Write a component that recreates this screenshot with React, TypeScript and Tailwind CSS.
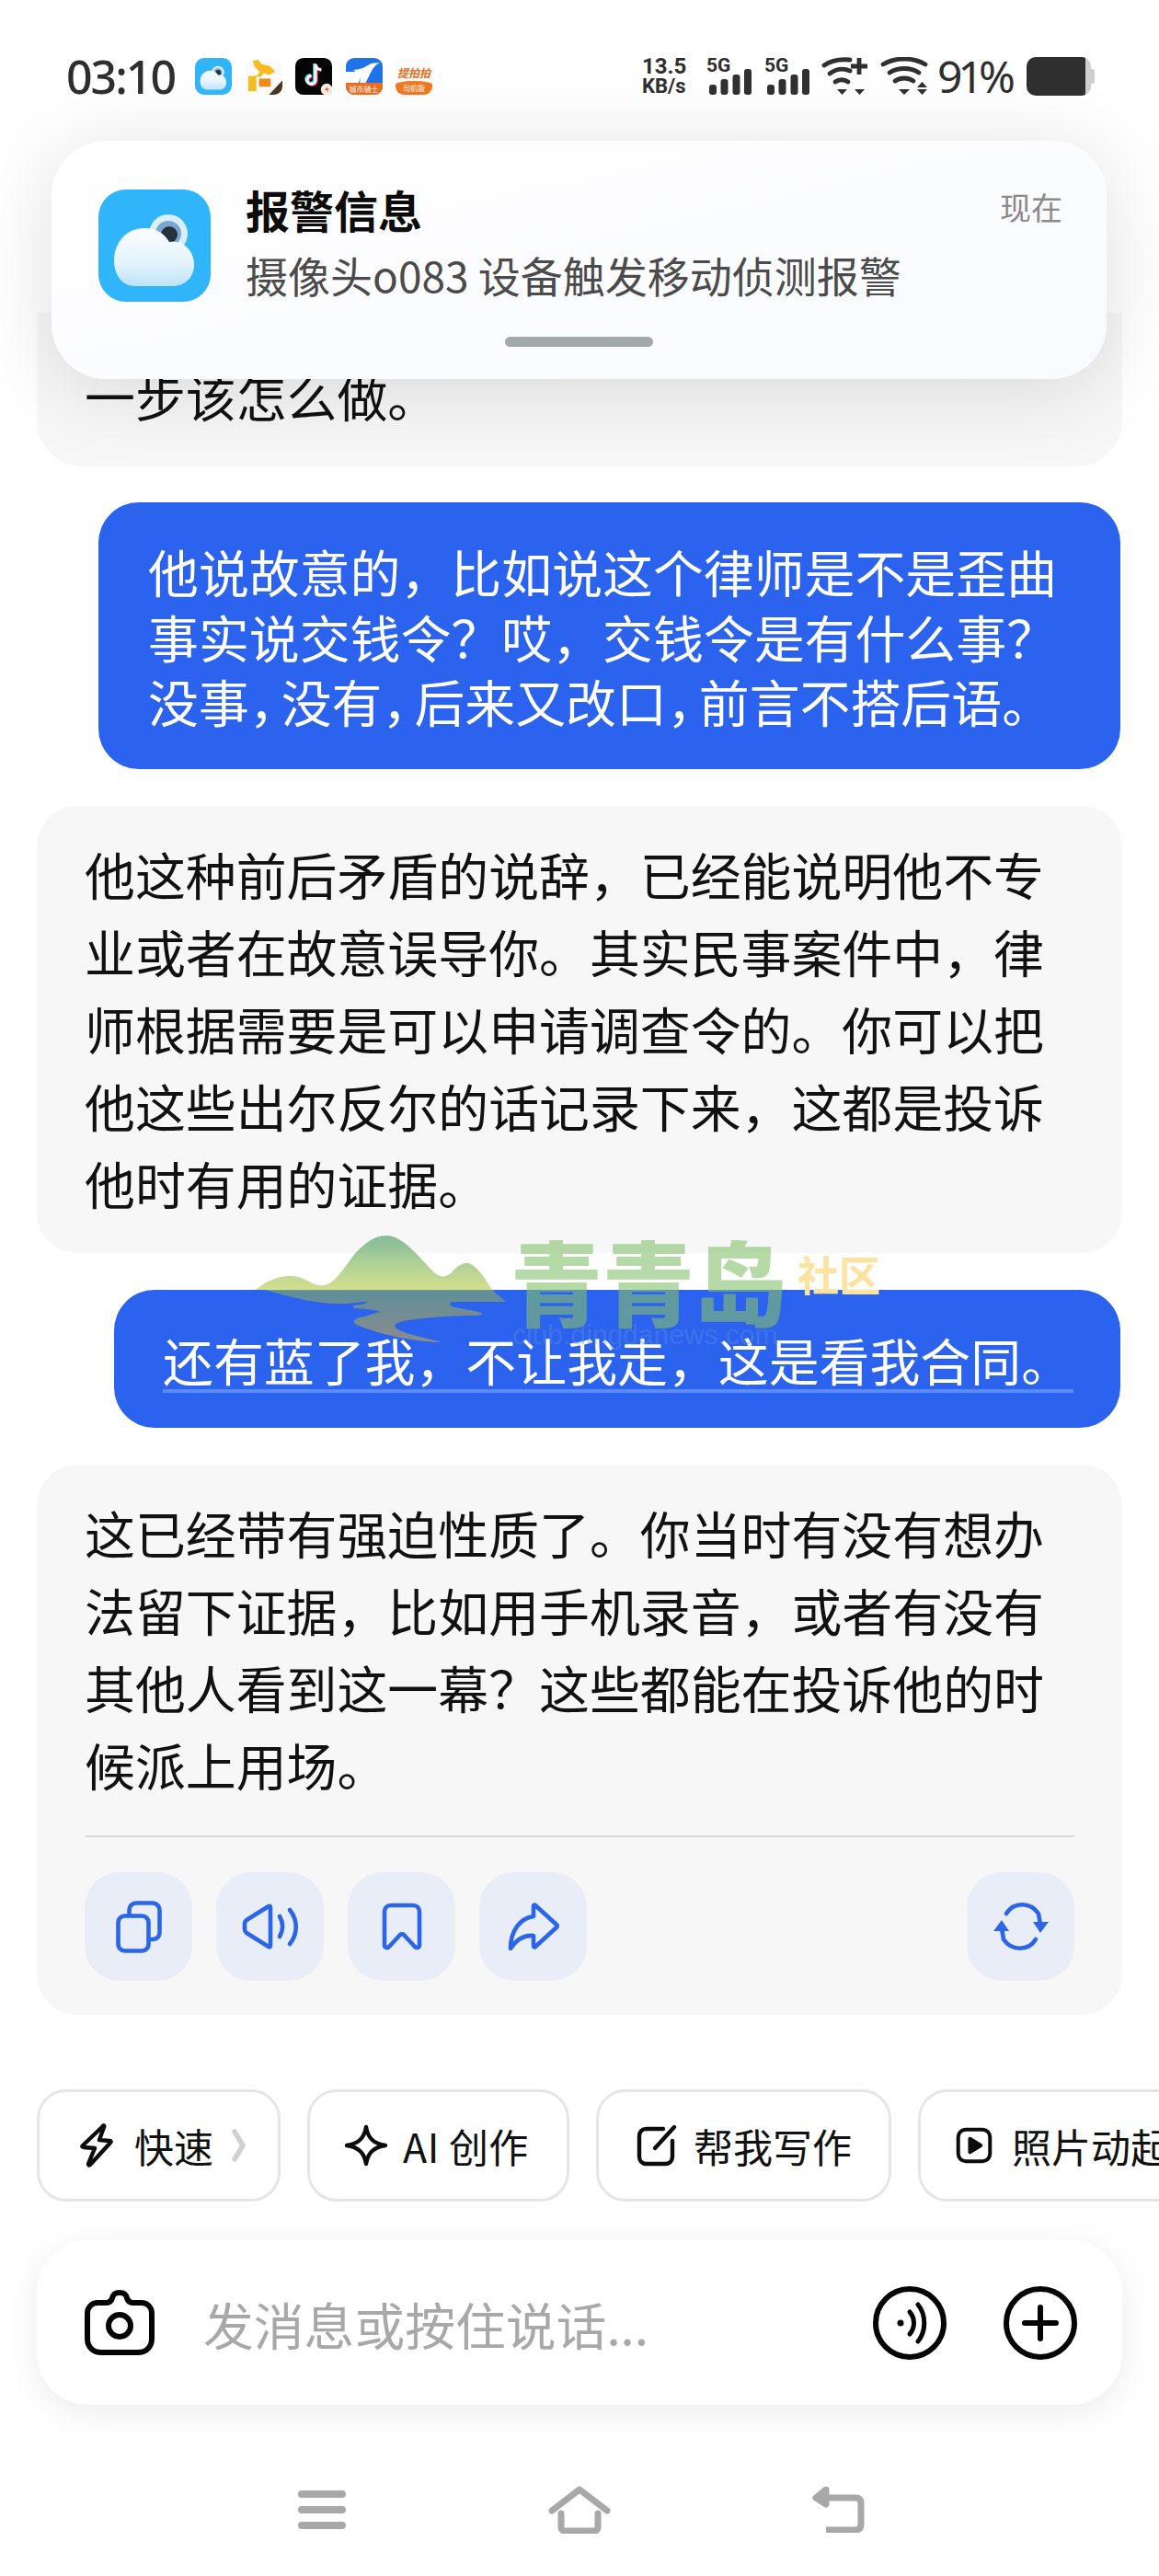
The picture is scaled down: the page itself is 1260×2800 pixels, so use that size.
import React from 'react';

const cjk = "font-['Noto_Sans_CJK_SC','Noto_Sans',sans-serif]";

// status bar bits
const CloudApp: React.FC<{ size: number; id: string }> = ({ size, id }) => (
  <svg width={size} height={size} viewBox="0 0 122 122">
    <defs>
      <linearGradient id={`${id}Body`} x1="0" y1="0" x2="0" y2="1">
        <stop offset="0" stopColor="#fbfdff" />
        <stop offset="0.6" stopColor="#e4f3fc" />
        <stop offset="1" stopColor="#bde3f9" />
      </linearGradient>
    </defs>
    <rect width="122" height="122" rx="30" fill="#30b4fa" />
    <circle cx="76" cy="48" r="21" fill="#d8eef9" />
    <circle cx="76" cy="48" r="14" fill="#7ba7cf" />
    <circle cx="77" cy="49" r="9" fill="#27313d" />
    <path d="M40 105C25 105 17 92 17 77 17 58 30 42 50 42c12 0 21 5 27 15 15-2 27 9 27 25 0 14-11 23-23 23z" fill={`url(#${id}Body)`} />
  </svg>
);

const KangarooApp = () => (
  <svg width="40" height="40" viewBox="0 0 41 41">
    <rect width="41" height="41" rx="10" fill="#fbfbfb" />
    <path d="M8 3l6-1 4 5 9 2 6 6-7 4-6-2-3 4h-5v16H3V20h9l4-4-6-6z" fill="#f6bb1f" />
    <rect x="15" y="23" width="13" height="9" fill="#f08a1a" />
    <path d="M41 25v6c0 6-4 10-10 10h-5z" fill="#4a3524" />
  </svg>
);

const TiktokApp = () => (
  <svg width="40" height="40" viewBox="0 0 41 41">
    <rect width="41" height="41" rx="9" fill="#050505" />
    <path d="M22.5 7v17.5a4.6 4.6 0 1 1-4.6-4.6" fill="none" stroke="#25f4ee" strokeWidth="3.6" transform="translate(-1 -.8)" />
    <path d="M22.5 7v17.5a4.6 4.6 0 1 1-4.6-4.6" fill="none" stroke="#fe2c55" strokeWidth="3.6" transform="translate(1 .8)" />
    <path d="M22.5 7c.3 3.6 3 6 6.5 6.2" fill="none" stroke="#fe2c55" strokeWidth="3.6" />
    <path d="M22.5 7v17.5a4.6 4.6 0 1 1-4.6-4.6M22.5 7c.3 3.6 3 6 6.5 6.2" fill="none" stroke="#fff" strokeWidth="3.2" />
    <circle cx="35" cy="35" r="6.5" fill="#fbe9dc" />
    <path d="M36 31l-3 5h2.5l-1 3 3-5H35z" fill="#d9542b" />
  </svg>
);

const RiderApp = () => (
  <div className="relative h-10 w-10 overflow-hidden rounded-[9px] bg-[#1f73ea]">
    <svg width="40" height="30" viewBox="0 0 40 30" className="absolute left-0 top-0">
      <path d="M0 15h13c4 5 2 10-1 15H0z" fill="#fff" />
      <path d="M8 13c8 0 15-4 19-7l10-1c-4 2-7 5-9 9l-8 16h-6c3-6 2-12-6-17z" fill="#fff" />
    </svg>
    <div className="absolute bottom-0 left-0 flex h-[13px] w-full items-center justify-center bg-[#ef6c1f] text-[8px] leading-none text-white">城市骑士</div>
  </div>
);

const OrangeApp = () => (
  <div className="flex h-10 w-10 flex-col items-center overflow-hidden rounded-[9px] bg-[#fbfafa]">
    <div className="mt-[9px] h-[13px] text-[12px] font-bold italic leading-[13px] text-[#e2711d]">提拍拍</div>
    <div className="mt-[3px] flex h-[15px] w-full items-center justify-center rounded-t-[50%_4px] bg-[#f0761f] text-[8px] leading-none text-white">司机版</div>
  </div>
);

const Signal: React.FC = () => (
  <div className="relative h-[42px] w-[50px] shrink-0">
    <span className="absolute left-0 top-0 text-[21px] font-bold leading-[19px] text-[#2e2e2e] font-['Roboto',sans-serif]">5G</span>
    <svg width="50" height="42" viewBox="0 0 50 42" className="absolute left-0 top-0" fill="#303030">
      <rect x="3" y="30" width="8" height="11" rx="3" />
      <rect x="15.5" y="24" width="8" height="17" rx="3" />
      <rect x="28.5" y="19" width="8" height="22" rx="3" />
      <rect x="41" y="13" width="8" height="28" rx="3" />
    </svg>
  </div>
);

const WifiPlus = () => (
  <svg width="50" height="42" viewBox="0 0 50 42" className="shrink-0">
    <g fill="none" stroke="#303030" strokeWidth="4.8" strokeLinecap="round">
      <path d="M3 9C10 4 20 2 31 3" />
      <path d="M9 18c7-5 15-6 22-3" />
      <path d="M15 27c4-3 10-3 14 0" />
    </g>
    <path d="M32 10h18M41 1v18" stroke="#303030" strokeWidth="4.8" />
    <path d="M17 35h11l-5.500 6zM36 35h11l-5.500 6z" fill="#303030" />
  </svg>
);

const WifiUpDown = () => (
  <svg width="52" height="42" viewBox="0 0 52 42" className="shrink-0">
    <g fill="none" stroke="#303030" strokeWidth="4.8" strokeLinecap="round">
      <path d="M3 8c13-8 33-8 46 0" />
      <path d="M10 17c9-6 23-6 32 0" />
      <path d="M16 26c6-4 14-4 20 0" />
    </g>
    <path d="M20 35h12l-6 6zM40 33l5.500-6 5.500 6zM40 35h11l-5.500 6z" fill="#303030" />
  </svg>
);

const Battery = () => (
  <div className="flex h-[42px] w-[74px] shrink-0 items-center">
    <div className="flex h-[42px] w-[70px] overflow-hidden rounded-[10px] bg-[#cfcfcf]">
      <div className="h-full w-[64px] bg-[#2f2f2f]" />
    </div>
    <div className="h-[16px] w-[4px] rounded-r-[2px] bg-[#cfcfcf]" />
  </div>
);

// action row icons
const blue = { fill: 'none', stroke: '#2b65e8', strokeWidth: 4.6, strokeLinecap: 'round', strokeLinejoin: 'round' } as const;

const CopyIcon = () => (
  <svg width="50" height="57" viewBox="0 0 50 57" {...blue}>
    <rect x="2.500" y="16.500" width="33" height="38" rx="7" />
    <path d="M14.500 15v-5c0-4 3-7.500 7.500-7.500h18c4 0 7.500 3.500 7.500 7.500v25c0 4-3.500 7-7.500 7h-4" />
  </svg>
);
const SpeakerIcon = () => (
  <svg width="62" height="50" viewBox="0 0 62 50" {...blue}>
    <path d="M29 3L5 18q-2 1.500-2 4v6q0 2.500 2 4l24 15q2 1 2-2V5q0-3-2-2z" />
    <path d="M41 14c4 7 4 15 0 22" />
    <path d="M52 7c9 11 9 26 0 37" />
  </svg>
);
const BookmarkIcon = () => (
  <svg width="44" height="52" viewBox="0 0 44 52" {...blue}>
    <path d="M3 10c0-4 3-7 7-7h24c4 0 7 3 7 7v36c0 3-3 4-5 2L24 35c-1-1-3-1-4 0L8 48c-2 2-5 1-5-2z" />
  </svg>
);
const ShareIcon = () => (
  <svg width="56" height="52" viewBox="0 0 56 52" {...blue}>
    <path d="M30 3l23 21c1 1 1 2 0 3L30 48c-1 1-2 0-2-1V36C17 35 9 41 3 50 3 31 13 17 28 15V4c0-1 1-2 2-1z" />
  </svg>
);
const RefreshIcon = () => (
  <svg width="62" height="54" viewBox="0 0 62 54" {...blue}>
    <path d="M15 13c8-13 26-13 35 0l2 12" />
    <path d="M47 41c-8 13-26 13-35 0l-2-12" />
    <path d="M1 32l9-12 8 12zM44 22l8 12 9-12z" fill="#2b65e8" stroke="none" />
  </svg>
);

const ActionBtn: React.FC<{ children: React.ReactNode }> = ({ children }) => (
  <div className="flex h-[118px] w-[117px] items-center justify-center rounded-[38px] bg-[#e8edf7]">{children}</div>
);

// chip icons
const black = { fill: 'none', stroke: '#0c0c0c', strokeWidth: 4.4, strokeLinecap: 'round', strokeLinejoin: 'round' } as const;

const BoltIcon = () => (
  <svg width="36" height="48" viewBox="0 0 36 48" {...black}>
    <path d="M25 3L3 24c-1 1-1 2 1 2l12 1-7 17c0 2 1 2 2 1l22-24c1-1 1-2-1-2l-11-1 5-14c1-2-1-2-1-1z" />
  </svg>
);
const SparkIcon = () => (
  <svg width="48" height="46" viewBox="0 0 48 46" {...black}>
    <path d="M24 3c2 12 8 18 21 20-13 2-19 8-21 20-2-12-8-18-21-20 13-2 19-8 21-20z" />
  </svg>
);
const WriteIcon = () => (
  <svg width="46" height="46" viewBox="0 0 46 46" {...black}>
    <path d="M30 5H12c-5 0-8 3-8 8v22c0 5 3 8 8 8h20c5 0 8-3 8-8V18" />
    <path d="M21 26L42 3" />
  </svg>
);
const PlayIcon = () => (
  <svg width="44" height="44" viewBox="0 0 44 44" {...black}>
    <rect x="3" y="3" width="38" height="38" rx="9" />
    <path d="M17 14l13 8-13 8z" fill="#0c0c0c" />
  </svg>
);

const Chip: React.FC<{ className?: string; children: React.ReactNode }> = ({ className, children }) => (
  <div className={`flex h-[122px] shrink-0 items-center rounded-[32px] border-[3px] border-[#e6e6e6] bg-white text-[43px] text-[#111] ${className ?? ''}`}>
    {children}
  </div>
);

// site watermark stamped over the screenshot
const Watermark = () => (
  <div className="pointer-events-none absolute left-[270px] top-[1335px] h-[130px] w-[700px]">
    <svg width="290" height="130" viewBox="0 0 290 130" className="absolute left-0 top-0 opacity-60">
      <defs>
        <linearGradient id="mountain" gradientUnits="userSpaceOnUse" x1="0" y1="8" x2="0" y2="125">
          <stop offset="0" stopColor="#3a9560" />
          <stop offset="0.5" stopColor="#b6cb44" />
          <stop offset="0.52" stopColor="#82ac62" />
          <stop offset="1" stopColor="#cda74b" />
        </linearGradient>
      </defs>
      <path d="M8 67c10-9 24-15 38-15 16 0 24 12 36 10 12-2 20-16 32-32C124 18 136 8 150 8c18 0 36 24 50 38 8 8 14 8 20 3 6-6 10-11 17-11 10 0 20 16 28 29l15 13h-55c-8 0-8 4 0 6l26 5c6 2 2 4-4 4-24 0-70 3-82 7-12 4-4 8 10 13l35 9c-30 0-72-10-92-19-6-3-4-7 8-9l16-5c2-2-16-3-26-4-4-1-4-3 6-4 10-2 8-3 2-3-36 6-66-2-106-13z" fill="url(#mountain)" />
    </svg>
    <div className={`absolute left-[285px] top-0 whitespace-nowrap text-[100px] font-black leading-[112px] text-[#84c06c]/60 ${cjk}`}>青青岛</div>
    <div className={`absolute left-[597px] top-[24px] text-[45px] font-bold leading-[52px] text-[#fde2a0] ${cjk}`}>社区</div>
    <div className="absolute left-[287px] top-[106px] whitespace-nowrap text-[30px] leading-[20px] text-[#5f8ce0]/40 font-['Liberation_Sans',sans-serif]">club.dingdanews.com</div>
  </div>
);

const App: React.FC = () => {
  return (
    <div className={`relative h-[2800px] w-[1260px] overflow-hidden bg-white ${cjk}`}>
      {/* Status bar */}
      <div className="relative z-20 flex h-[340px] items-start pl-[72px] pt-[62px]">
        <div className="w-[140px] text-[50px] font-medium leading-[42px] tracking-[-2px] text-[#2e2e2e] font-['Noto_Sans',sans-serif]">03:10</div>
        <div className="mt-[1px] flex gap-[14.5px]">
          <CloudApp size={40} id="small" />
          <KangarooApp />
          <TiktokApp />
          <RiderApp />
          <OrangeApp />
        </div>
        <div className="ml-auto mr-[70px] flex items-center">
          <div className="mr-[20px] flex h-[42px] w-[50px] flex-col justify-between font-bold text-[#2e2e2e] font-['Roboto',sans-serif]">
            <span className="text-[24px] leading-[20px]">13.5</span>
            <span className="text-[22px] leading-[20px]">KB/s</span>
          </div>
          <div className="mr-[13px]"><Signal /></div>
          <div className="mr-[12px]"><Signal /></div>
          <div className="mr-[14px]"><WifiPlus /></div>
          <div className="mr-[10px]"><WifiUpDown /></div>
          <div className="mr-[16px] w-[81px] whitespace-nowrap text-[48px] leading-[42px] tracking-[-5px] text-[#2e2e2e] font-['Noto_Sans',sans-serif]">91%</div>
          <Battery />
        </div>
      </div>

      {/* Notification banner */}
      <div className="absolute left-[56px] top-[153px] z-10 h-[259px] w-[1147px] rounded-[60px] bg-gradient-to-br from-white to-[#f9fafe] shadow-[0_10px_90px_rgba(0,0,0,0.13)]">
        <div className="flex pl-[51px] pt-[53px]">
          <CloudApp size={122} id="large" />
          <div className="-mt-[7px] ml-[38px] flex-1">
            <div className="text-[48px] font-bold leading-[56px] text-[#0c0c0c]">报警信息</div>
            <div className="mt-[15px] text-[46px] leading-[56px] text-[#4b4b4b]">摄像头o083 设备触发移动侦测报警</div>
          </div>
          <div className="mr-[48px] -mt-[3px] text-[34px] leading-[44px] text-[#8a8a8a]">现在</div>
        </div>
        <div className="absolute left-[493px] top-[213px] h-[11px] w-[161px] rounded-full bg-[#a3a8ab]" />
      </div>

      {/* Chat */}
      <div className="mx-[40px] flex h-[167px] w-[1180px] items-end rounded-b-[50px] bg-[#f7f7f8] pb-[36px] pl-[52px] text-[54.9px] leading-[84px] text-[#111]">
        一步该怎么做。
      </div>

      <div className="ml-[107px] mt-[39px] h-[290px] w-[1111px] whitespace-nowrap rounded-[44px] bg-[#2b63ee] pl-[54px] pt-[39px] text-[54.9px] leading-[70.5px] text-white">
        他说故意的，比如说这个律师是不是歪曲<br />
        事实说交钱令？哎，交钱令是有什么事？<br />
        没事<span className="tracking-[-20px]">，</span>没有<span className="tracking-[-20px]">，</span>后来又改口<span className="tracking-[-20px]">，</span>前言不搭后语。
      </div>

      <div className="ml-[40px] mt-[40px] h-[486px] w-[1180px] rounded-[44px] bg-[#f7f7f8] pl-[52px] pt-[31px] text-[54.9px] leading-[84px] text-[#111]">
        他这种前后矛盾的说辞，已经能说明他不专<br />
        业或者在故意误导你。其实民事案件中，律<br />
        师根据需要是可以申请调查令的。你可以把<br />
        他这些出尔反尔的话记录下来，这都是投诉<br />
        他时有用的证据。
      </div>

      <div className="ml-[124px] mt-[40px] h-[150px] w-[1094px] rounded-[44px] bg-[#2b63ee] pl-[53px] pt-[40px] text-[54.9px] leading-[70.5px] text-white">
        <span className="inline-block w-[990px] border-b-[4px] border-[#5b8cff] leading-[66px]">还有蓝了我，不让我走，这是看我合同。</span>
      </div>

      <div className="ml-[40px] mt-[40px] h-[598px] w-[1180px] rounded-[44px] bg-[#f7f7f8] px-[52px] pt-[31px] text-[54.9px] leading-[84px] text-[#111]">
        这已经带有强迫性质了。你当时有没有想办<br />
        法留下证据，比如用手机录音，或者有没有<br />
        其他人看到这一幕？这些都能在投诉他的时<br />
        候派上用场。
        <div className="mt-[36px] border-t-[2px] border-[#dcdcdc]" />
        <div className="mt-[38px] flex gap-[26px]">
          <ActionBtn><CopyIcon /></ActionBtn>
          <ActionBtn><SpeakerIcon /></ActionBtn>
          <ActionBtn><BookmarkIcon /></ActionBtn>
          <ActionBtn><ShareIcon /></ActionBtn>
          <div className="ml-auto"><ActionBtn><RefreshIcon /></ActionBtn></div>
        </div>
      </div>

      {/* Quick chips */}
      <div className="ml-[40px] mt-[81px] flex gap-[29px] overflow-hidden">
        <Chip className="w-[265px] pl-[44px]">
          <BoltIcon />
          <span className="ml-[23px]">快速</span>
          <svg width="16" height="36" viewBox="0 0 16 36" className="ml-[20px]" fill="none" stroke="#d0d0d0" strokeWidth="5.500" strokeLinecap="round" strokeLinejoin="round"><path d="M3 3l9 15-9 15" /></svg>
        </Chip>
        <Chip className="w-[285px] pl-[37px]">
          <SparkIcon />
          <span className="ml-[16px] tracking-[0.5px]">AI 创作</span>
        </Chip>
        <Chip className="w-[321px] pl-[40px]">
          <WriteIcon />
          <span className="ml-[17px]">帮我写作</span>
        </Chip>
        <Chip className="w-[320px] pl-[38px]">
          <PlayIcon />
          <span className="ml-[21px] whitespace-nowrap">照片动起来</span>
        </Chip>
      </div>

      {/* Input */}
      <div className="ml-[40px] mt-[42px] flex h-[179px] w-[1180px] items-center rounded-[56px] bg-white pl-[52px] pr-[49px] shadow-[0_8px_36px_rgba(0,0,0,0.08)]">
        <svg width="76" height="72" viewBox="0 0 76 72" fill="none" stroke="#050505" strokeWidth="6" strokeLinejoin="round">
          <path d="M14 14h10c3 0 5-2 6-5 1-4 3-6 8-6s7 2 8 6c1 3 3 5 6 5h10c6 0 11 5 11 11v28c0 9-6 15-15 15H18C9 68 3 62 3 53V25c0-6 5-11 11-11z" />
          <circle cx="38" cy="39" r="12" />
        </svg>
        <div className="ml-[53px] flex-1 text-[54.8px] leading-[64px] text-[#a8a8a8]">发消息或按住说话...</div>
        <svg width="80" height="80" viewBox="0 0 80 80" fill="none" stroke="#050505" strokeWidth="6" strokeLinecap="round" className="mr-[62px]">
          <circle cx="40" cy="40" r="37" />
          <circle cx="30" cy="40" r="3.500" fill="#050505" stroke="none" />
          <path d="M40 28c6 7 6 17 0 24" strokeWidth="5" />
          <path d="M49 20c9 11 9 29 0 40" strokeWidth="5" />
        </svg>
        <svg width="80" height="80" viewBox="0 0 80 80" fill="none" stroke="#050505" strokeWidth="6" strokeLinecap="round">
          <circle cx="40" cy="40" r="37" />
          <path d="M23 40h34M40 23v34" />
        </svg>
      </div>

      {/* Nav bar */}
      <div className="relative mt-[88px] flex h-[52px] items-center pl-[324px]">
        <div className="flex h-[42px] w-[52px] flex-col justify-between">
          <span className="h-[8px] rounded-full bg-[#a8a8a8]" />
          <span className="h-[8px] rounded-full bg-[#a8a8a8]" />
          <span className="h-[8px] rounded-full bg-[#a8a8a8]" />
        </div>
        <svg width="68" height="52" viewBox="0 0 68 52" fill="none" stroke="#a8a8a8" strokeWidth="7" strokeLinecap="round" strokeLinejoin="round" className="ml-[220px]">
          <path d="M4 27L34 4l30 23" />
          <path d="M14 30v15c0 3 2 4 4 4h32c2 0 4-1 4-4V30" />
        </svg>
        <svg width="58" height="50" viewBox="0 0 58 50" fill="none" stroke="#a8a8a8" strokeWidth="7" strokeLinejoin="round" className="ml-[218px]">
          <path d="M14 12h34c4 0 6 2 6 6v23c0 4-2 6-6 6H16" />
          <path d="M16 3L5 12l11 7z" fill="#a8a8a8" />
        </svg>
      </div>

      <Watermark />
    </div>
  );
};

export default App;
